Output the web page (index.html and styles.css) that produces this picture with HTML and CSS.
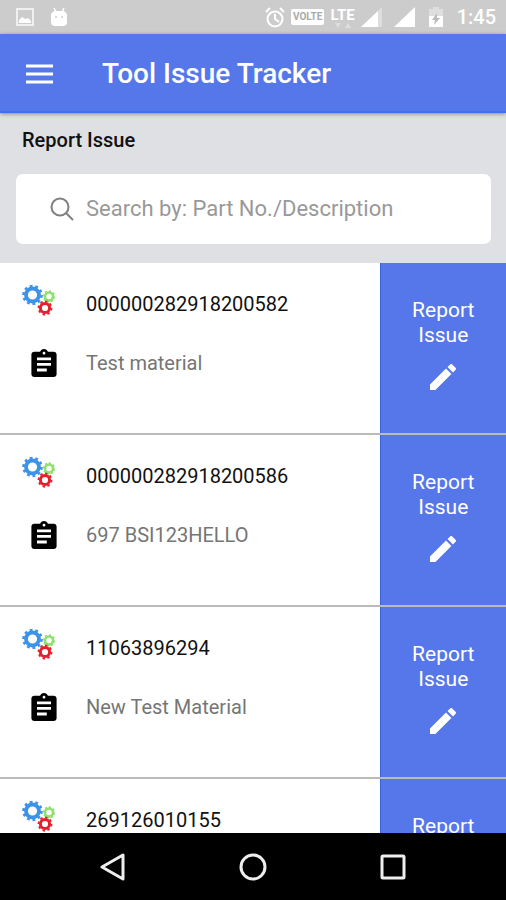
FILE: index.html
```html
<!DOCTYPE html>
<html lang="en">
<head>
<meta charset="utf-8">
<meta name="viewport" content="width=device-width, initial-scale=1">
<title>Tool Issue Tracker</title>
<link rel="stylesheet" href="styles.css">
</head>
<body>
<svg class="sprite" width="0" height="0" aria-hidden="true">
  <symbol id="gears" viewBox="0 0 34 32">
    <g fill="none">
      <g stroke="#3d93e8">
        <circle cx="10.500" cy="11" r="6.500" stroke-width="3.800"/>
        <circle cx="10.500" cy="11" r="9" stroke-width="2.600" pathLength="100" stroke-dasharray="5 5"/>
      </g>
      <g stroke="#8fe070">
        <circle cx="27" cy="12.500" r="4" stroke-width="2.600"/>
        <circle cx="27" cy="12.500" r="5.400" stroke-width="1.600" pathLength="80" stroke-dasharray="5 5"/>
      </g>
      <g stroke="#e5202e">
        <circle cx="23" cy="24" r="4.600" stroke-width="3"/>
        <circle cx="23" cy="24" r="6.500" stroke-width="1.800" pathLength="80" stroke-dasharray="5 5"/>
      </g>
    </g>
  </symbol>
  <symbol id="clipboard" viewBox="3 1 18 20">
    <path fill="#000" d="M19 3h-4.18C14.4 1.84 13.300 1 12 1s-2.400.84-2.820 2H5c-1.100 0-2 .9-2 2v14c0 1.100.9 2 2 2h14c1.100 0 2-.9 2-2V5c0-1.100-.9-2-2-2zm-7 0c.55 0 1 .45 1 1s-.45 1-1 1-1-.45-1-1 .45-1 1-1zm2 14H7v-2h7v2zm3-4H7v-2h10v2zm0-4H7V7h10v2z"/>
  </symbol>
  <symbol id="pencil" viewBox="3 3 18 18">
    <path fill="#fff" d="M3 17.250V21h3.750L17.810 9.940l-3.750-3.750L3 17.250zM20.710 7.040c.39-.39.39-1.020 0-1.410l-2.340-2.340c-.39-.39-1.020-.39-1.410 0l-1.830 1.830 3.750 3.750 1.830-1.830z"/>
  </symbol>
</svg>

<div class="app">
  <div class="status">
    <svg width="18" height="18" viewBox="0 0 18 18" aria-hidden="true">
      <path fill="none" stroke="#f0f0f0" stroke-width="2" d="M1 1h16v16H1z"/>
      <path fill="#fff" d="M3 15v-3l3-3 3 2 3-1 3 3v2z"/>
    </svg>
    <svg width="18" height="20" viewBox="0 0 18 20" aria-hidden="true">
      <path stroke="#fff" stroke-width="1.500" d="M4 1l2 4M14 1l-2 4"/>
      <path fill="#fff" d="M4 4h10l3 3v8q0 4-4 4H5q-4 0-4-4V7z"/>
      <circle cx="6" cy="10" r="1" fill="#ccc"/><circle cx="12" cy="10" r="1" fill="#ccc"/>
    </svg>
    <div class="status-right">
      <svg width="20" height="21" viewBox="0 0 20 21" aria-hidden="true">
        <g fill="none" stroke="#fff" stroke-width="2">
          <circle cx="10" cy="12" r="7.500"/>
          <path d="M1 5l4-4M19 5l-4-4M10 7v5l4 3"/>
        </g>
      </svg>
      <span class="volte">VOLTE</span>
      <span class="lte">LTE
        <svg width="16" height="5" viewBox="0 0 16 5" aria-hidden="true"><path fill="#dedede" d="M0 0h6L3 5zM10 5h6l-3-5z"/></svg>
      </span>
      <svg width="21" height="20" viewBox="0 0 21 20" aria-hidden="true">
        <path fill="#dedede" d="M21 0v20H0z"/><path fill="#fff" d="M17 4v16H0z"/>
      </svg>
      <svg class="status-signal" width="21" height="20" viewBox="0 0 21 20" aria-hidden="true">
        <path fill="#fff" d="M21 0v20H0z"/>
      </svg>
      <svg class="status-battery" width="14" height="20" viewBox="0 0 14 20" aria-hidden="true">
        <path fill="#dedede" d="M4 0h6v2h4v8H0V2h4z"/><path fill="#fff" d="M0 9h14v11H0z"/>
        <path fill="#bbb" d="M8 6l-5 7h3l-1 5 6-7H8z"/>
      </svg>
      <span class="clock">1:45</span>
    </div>
  </div>

  <header class="toolbar">
    <button class="menu" type="button" aria-label="Menu">
      <svg width="27" height="20" viewBox="0 0 27 20" aria-hidden="true"><path stroke="#fff" stroke-width="3" d="M0 2h27M0 10h27M0 18h27"/></svg>
    </button>
    <h1>Tool Issue Tracker</h1>
  </header>

  <main class="content">
    <section class="search-panel">
      <h2>Report Issue</h2>
      <label class="search">
        <svg width="24" height="24" viewBox="0 0 24 24" aria-hidden="true"><g fill="none" stroke="#808080" stroke-width="2"><circle cx="10" cy="10" r="8.500"/><path d="M16 16l7 7"/></g></svg>
        <input type="text" aria-label="Search parts" placeholder="Search by: Part No./Description">
      </label>
    </section>

    <ul class="parts">
      <li class="part">
        <div class="details">
          <svg class="gears" aria-hidden="true"><use href="#gears"/></svg>
          <span class="number">000000282918200582</span>
          <svg class="clipboard" aria-hidden="true"><use href="#clipboard"/></svg>
          <span class="description">Test material</span>
        </div>
        <button class="report" type="button"><span>Report Issue</span><svg class="pencil" aria-hidden="true"><use href="#pencil"/></svg></button>
      </li>
      <li class="part">
        <div class="details">
          <svg class="gears" aria-hidden="true"><use href="#gears"/></svg>
          <span class="number">000000282918200586</span>
          <svg class="clipboard" aria-hidden="true"><use href="#clipboard"/></svg>
          <span class="description">697 BSI123HELLO</span>
        </div>
        <button class="report" type="button"><span>Report Issue</span><svg class="pencil" aria-hidden="true"><use href="#pencil"/></svg></button>
      </li>
      <li class="part">
        <div class="details">
          <svg class="gears" aria-hidden="true"><use href="#gears"/></svg>
          <span class="number">11063896294</span>
          <svg class="clipboard" aria-hidden="true"><use href="#clipboard"/></svg>
          <span class="description">New Test Material</span>
        </div>
        <button class="report" type="button"><span>Report Issue</span><svg class="pencil" aria-hidden="true"><use href="#pencil"/></svg></button>
      </li>
      <li class="part">
        <div class="details">
          <svg class="gears" aria-hidden="true"><use href="#gears"/></svg>
          <span class="number">269126010155</span>
        </div>
        <button class="report" type="button"><span>Report</span></button>
      </li>
    </ul>
  </main>

  <nav class="system-nav" aria-label="System">
    <button type="button" aria-label="Back"><svg width="28" height="28" viewBox="0 0 28 28" aria-hidden="true"><path d="M24 2v24L3 14z"/></svg></button>
    <button type="button" aria-label="Home"><svg width="28" height="28" viewBox="0 0 28 28" aria-hidden="true"><circle cx="14" cy="14" r="12"/></svg></button>
    <button type="button" aria-label="Recent apps"><svg width="28" height="28" viewBox="0 0 28 28" aria-hidden="true"><rect x="3" y="3" width="22" height="22" rx="1"/></svg></button>
  </nav>
</div>
</body>
</html>
```
FILE: styles.css
```css
* {
  box-sizing: border-box;
}

body {
  margin: 0;
  font-family: Roboto, "Liberation Sans", sans-serif;
  color: #111;
}

button {
  padding: 0;
  border: 0;
  background: none;
  font: inherit;
  color: inherit;
}

svg {
  display: block;
  flex: none;
}

.sprite {
  position: absolute;
}

.app {
  display: flex;
  flex-direction: column;
  height: 100vh;
  overflow: hidden;
}

.status {
  display: flex;
  flex: none;
  align-items: center;
  gap: 16px;
  height: 34px;
  padding: 0 10px 0 16px;
  background: #ccc;
  color: #fff;
}

.status-right {
  display: flex;
  align-items: center;
  gap: 6px;
  margin-left: auto;
}

.volte {
  padding: 0 2px;
  border-radius: 2px;
  background: #fff;
  color: #aaa;
  font-size: 10px;
  font-weight: 700;
  line-height: 16px;
}

.lte {
  font-size: 15px;
  font-weight: 700;
  line-height: 16px;
}

.lte svg {
  margin: 0 auto;
}

.status-signal {
  margin-left: 6px;
}

.status-battery {
  margin: 0 8px;
}

.clock {
  font-size: 20px;
  font-weight: 500;
}

.toolbar {
  position: relative;
  display: flex;
  flex: none;
  align-items: center;
  height: 79px;
  padding: 2px 26px 0;
  border-bottom: 2px solid #426ee8;
  background: #5677e9;
  box-shadow: 0 1px 4px rgba(0, 0, 0, 0.4);
  color: #fff;
}

.toolbar h1 {
  margin: 0 0 0 49px;
  font-size: 28px;
  font-weight: 500;
  line-height: 32px;
}

.content {
  flex: 1;
  min-height: 0;
  overflow: hidden;
  background: #fff;
}

.search-panel {
  padding: 15px 15px 19px 16px;
  background: #dfe0e4;
}

.search-panel h2 {
  margin: 0 6px 22px;
  font-size: 20px;
  font-weight: 500;
  line-height: 24px;
}

.search {
  display: flex;
  align-items: center;
  gap: 12px;
  height: 70px;
  padding: 0 16px 0 34px;
  border-radius: 7px;
  background: #fff;
}

.search input {
  flex: 1;
  min-width: 0;
  padding: 0;
  border: 0;
  outline: 0;
  background: none;
  color: #333;
  font: 22px/28px Roboto, "Liberation Sans", sans-serif;
}

.search input::placeholder {
  color: #999;
  opacity: 1;
}

.parts {
  margin: 0;
  padding: 0;
  list-style: none;
}

.part {
  display: grid;
  grid-template-columns: 3fr 1fr;
  height: 172px;
  border-bottom: 2px solid #bbb;
}

.details {
  display: grid;
  grid-template-columns: 44px 1fr;
  grid-auto-rows: 24px;
  row-gap: 35px;
  align-content: start;
  align-items: center;
  column-gap: 20px;
  padding: 29px 0 0 22px;
  font-size: 20px;
  line-height: 24px;
}

.gears {
  align-self: end;
  width: 34px;
  height: 32px;
}

.clipboard {
  justify-self: center;
  width: 26px;
  height: 28px;
}

.description {
  color: #757575;
}

.report {
  display: flex;
  flex-direction: column;
  align-items: center;
  gap: 16px;
  padding: 35px 24px 0;
  border-left: 1px solid #3461dc;
  background: #5677e9;
  color: #fff;
  font-size: 21px;
  line-height: 25px;
}

.pencil {
  width: 26px;
  height: 26px;
}

.system-nav {
  display: flex;
  flex: none;
  align-items: center;
  justify-content: center;
  gap: 112px;
  height: 67px;
  background: #000;
}

.system-nav svg {
  fill: none;
  stroke: #eee;
  stroke-width: 3;
  stroke-linejoin: round;
}
```
